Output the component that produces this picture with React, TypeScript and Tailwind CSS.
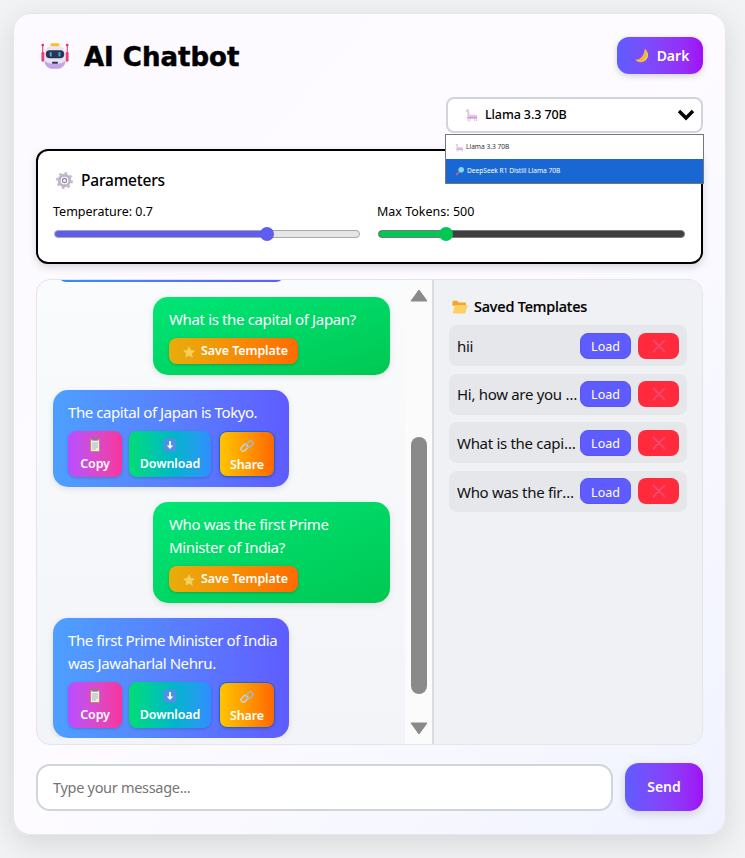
import React from "react";

const Robot = () => (
  <svg width="28" height="27" viewBox="0 0 32 30">
    <rect x="11" y="1" width="10" height="4" rx="1.5" fill="#f9c11c" />
    <path d="M2 4v17M30 4v17" stroke="#ec2f6d" strokeWidth="1.2" />
    <circle cx="2" cy="3" r="1.5" fill="#f0246a" />
    <circle cx="30" cy="3" r="1.5" fill="#f0246a" />
    <rect x="0.5" y="11" width="3.5" height="11" rx="1.5" fill="#ef3a78" />
    <rect x="28" y="11" width="3.5" height="11" rx="1.5" fill="#ef3a78" />
    <rect x="4" y="4" width="24" height="26" rx="8" fill="#e9e2f0" />
    <path d="M4 21c0 5 4 9 8 9h8c4 0 8-4 8-9-5 5-19 5-24 0z" fill="#c3a5e6" />
    <rect x="5.5" y="9" width="21" height="9" rx="4.5" fill="#2e3350" />
    <rect x="10" y="11" width="2.2" height="5" rx="1" fill="#2fb7f5" />
    <rect x="20" y="11" width="2.2" height="5" rx="1" fill="#2fb7f5" />
    <rect x="12.5" y="22" width="7" height="2.5" rx="1.2" fill="#2e3350" />
  </svg>
);

const Gear = () => (
  <svg width="17" height="17" viewBox="0 0 18 18">
    <circle cx="9" cy="9" r="5.6" fill="none" stroke="#bdb4c8" strokeWidth="3" />
    <circle cx="9" cy="9" r="7.8" fill="none" stroke="#c4bccd" strokeWidth="2.4" strokeDasharray="2.8 3.3" />
    <circle cx="9" cy="9" r="2.8" fill="#8f8799" />
    <circle cx="9" cy="9" r="1.6" fill="#f4f1f7" />
  </svg>
);

const Moon = () => (
  <svg width="15" height="15" viewBox="0 0 16 16">
    <path d="M10.4 .6C15.4 4.4 14.8 14 6.6 15.2 3.8 15.6 1.4 14.2.4 12c4.6 1.2 9.4-3 10-11.4z" fill="#f5b53a" />
    <path d="M11.8 2.6c2.6 4.8.2 10.8-5.4 12.2 6.8-.2 9.6-7.6 5.4-12.2z" fill="#fbd968" />
  </svg>
);

const Llama = ({ s = 14 }: { s?: number }) => (
  <svg width={s} height={s} viewBox="0 0 14 14">
    <path
      d="M1.5 1.2 4 1.6l.6 5.2h6c1 0 1.6.8 1.6 1.8v4.6h-1.2V10.6h-.8v2.6H9V10.8H5.6v2.4H4.4v-2.4h-.8v2.4H2.4V5.4c0-.8 0-1.2-.2-1.6L.8 3.4z"
      fill="#e5c3ea"
    />
    <path d="M2.4 9h9.4v1.2H2.4z" fill="#c79ad4" />
  </svg>
);

const Magnifier = () => (
  <svg width="10" height="10" viewBox="0 0 10 10">
    <path d="M4 6 1 9" stroke="#ee5a7a" strokeWidth="1.6" />
    <circle cx="6.2" cy="3.8" r="2.8" fill="#7fd8f5" />
  </svg>
);

const Star = () => (
  <svg width="14" height="14" viewBox="0 0 14 14">
    <path
      d="M7 .6l2 4.2 4.6.6-3.4 3.2.9 4.6L7 10.9l-4.1 2.3.9-4.6L.4 5.4 5 4.8z"
      fill="#f5cf5a"
      stroke="#d9a520"
      strokeWidth=".5"
    />
  </svg>
);

const Clipboard = () => (
  <svg width="12" height="14" viewBox="0 0 12 14">
    <rect x="1" y="1" width="10" height="13" rx="1" fill="#c98a4b" />
    <rect x="2" y="2.4" width="8" height="10.6" fill="#eef0f6" />
    <rect x="3.5" y="0" width="5" height="2.6" rx=".6" fill="#7c818b" />
    <path d="M3 5h6M3 7h6M3 9h6M3 11h4" stroke="#a3a9b5" strokeWidth=".9" />
  </svg>
);

const DownBox = () => (
  <svg width="14" height="14" viewBox="0 0 14 14">
    <rect x=".5" y=".5" width="13" height="13" rx="2" fill="#4f8fe6" />
    <path d="M7 3v6" stroke="#fff" strokeWidth="1.8" />
    <path d="M3.8 7.4h6.4L7 11z" fill="#fff" />
  </svg>
);

const LinkIcon = () => (
  <svg width="14" height="14" viewBox="0 0 14 14" fill="none">
    <rect x=".6" y="6.4" width="7.6" height="4.6" rx="2.3" transform="rotate(-45 4.4 8.7)" stroke="#c9d3e6" strokeWidth="1.4" />
    <rect x="5.8" y="3" width="7.6" height="4.6" rx="2.3" transform="rotate(-45 9.6 5.3)" stroke="#aab6cc" strokeWidth="1.4" />
  </svg>
);

const Folder = () => (
  <svg width="16" height="14" viewBox="0 0 16 14">
    <path d="M.5 2c0-.8.5-1.2 1.2-1.2h3.4l1.4 1.6h6.4c.7 0 1.1.4 1.1 1.1V6H.5z" fill="#f5a623" />
    <path d="M.6 13.2c.2.3.5.4.9.4h10.8c.5 0 .9-.3 1-.8L15.6 6c.1-.5-.2-.9-.7-.9H3.6c-.5 0-.9.3-1 .8z" fill="#fdd063" />
  </svg>
);

const Cross = () => (
  <svg width="14" height="14" viewBox="0 0 14 14">
    <path d="M1 1l12 12M13 1 1 13" stroke="#f2476f" strokeWidth="1.9" />
  </svg>
);

const Slider = ({
  pct,
  fill,
  track,
  border,
}: {
  pct: number;
  fill: string;
  track: string;
  border: string;
}) => (
  <div className={`relative h-2 rounded-full border ${track} ${border}`}>
    <div className={`h-full rounded-full ${fill}`} style={{ width: `${pct}%` }} />
    <div
      className={`absolute top-1/2 h-3.5 w-3.5 -translate-x-1/2 -translate-y-1/2 rounded-full ${fill}`}
      style={{ left: `${pct}%` }}
    />
  </div>
);

const SaveBtn = () => (
  <button className="flex h-[26px] w-[129px] items-center justify-center gap-[5px] rounded-lg bg-gradient-to-r from-[#e8ad0c] to-[#ff6a00] pl-[3px] pt-px text-[12.5px] font-semibold tracking-[-0.1px] text-white shadow-[0_1px_3px_rgba(0,0,0,0.2)]">
    <Star />
    Save Template
  </button>
);

const UserBubble = ({ children }: { children: React.ReactNode }) => (
  <div className="flex justify-end">
    <div className="w-[237px] rounded-[15px] bg-gradient-to-br from-[#00e676] to-[#00c853] px-4 pb-[11px] pt-[11px] text-white shadow-[0_2px_6px_rgba(0,0,0,0.1)]">
      <p className="mb-[7px] whitespace-nowrap text-[15px] leading-[23px] tracking-[-0.36px]">{children}</p>
      <SaveBtn />
    </div>
  </div>
);

const ActionBtn = ({
  cls,
  width,
  icon,
  label,
}: {
  cls: string;
  width: string;
  icon: React.ReactNode;
  label: string;
}) => (
  <button
    className={`flex h-[46px] shrink-0 flex-col items-center gap-[3px] rounded-lg pt-[7px] text-[12.5px] font-semibold leading-[17px] tracking-[-0.1px] text-white shadow-[0_1px_3px_rgba(0,0,0,0.18)] ${cls} ${width}`}
  >
    {icon}
    {label}
  </button>
);

const BotBubble = ({ children }: { children: React.ReactNode }) => (
  <div className="flex justify-start">
    <div className="w-[236px] rounded-[15px] bg-gradient-to-r from-[#4d9fff] to-[#5f5cff] pb-[10px] pl-[15px] pr-[14px] pt-[11px] text-white shadow-[0_2px_6px_rgba(0,0,0,0.1)]">
      <p className="mb-[7px] whitespace-nowrap text-[15px] leading-[23px] tracking-[-0.42px]">{children}</p>
      <div className="flex gap-[7px]">
        <ActionBtn cls="bg-gradient-to-r from-[#b84dff] to-[#f8329c]" width="w-[54px]" icon={<Clipboard />} label="Copy" />
        <ActionBtn cls="bg-gradient-to-r from-[#00dc72] to-[#2f8dff]" width="w-[82px]" icon={<DownBox />} label="Download" />
        <ActionBtn cls="bg-gradient-to-r from-[#ffc400] to-[#ff6600] border border-[#1a66d8] ml-px" width="w-[56px]" icon={<LinkIcon />} label="Share" />
      </div>
    </div>
  </div>
);

const TemplateRow = ({ text }: { text: string }) => (
  <div className="flex h-[41px] items-center rounded-lg bg-[#e5e7eb] pl-2 pr-2">
    <span className="min-w-0 flex-1 truncate pt-px text-[15px] tracking-[-0.3px] text-[#111]">{text}</span>
    <button className="ml-px h-[26px] w-[51px] shrink-0 rounded-lg border border-[#5a57f0] bg-[#5f5cff] pt-[3px] text-[12.5px] text-white">Load</button>
    <button className="ml-[7px] flex h-[26px] w-[41px] shrink-0 items-center justify-center rounded-lg bg-[#ff2a3c]">
      <Cross />
    </button>
  </div>
);

export default function App() {
  return (
    <div className="min-h-[858px] bg-[#f1f3f5] pl-[13px] pt-[13px] font-['Noto_Sans','Open_Sans',sans-serif]">
      <div className="relative h-[822px] w-[713px] rounded-[18px] border border-[#e5e7eb] bg-gradient-to-br from-[#fdfaff] via-[#fdfbff] to-[#f0f3ff] px-[22px] pt-[23px] shadow-[0_8px_32px_rgba(0,0,0,0.12)]">
        <header className="flex h-[37px] items-center justify-between">
          <div className="flex items-center gap-[15px] pl-[5px]">
            <Robot />
            <h1 className="pt-[2px] font-['DejaVu_Sans',sans-serif] text-[26px] font-bold leading-none text-black [-webkit-text-stroke:0.5px_black]">AI Chatbot</h1>
          </div>
          <button className="flex h-[37px] w-[86px] items-center justify-center gap-[7px] rounded-xl bg-gradient-to-r from-[#5f5cff] to-[#a00cf5] pl-[4px] text-sm font-semibold text-white shadow-[0_2px_6px_rgba(0,0,0,0.18)]">
            <Moon />
            Dark
          </button>
        </header>

        <div className="mt-[23px] flex justify-end">
          <div className="relative w-[257px]">
            <div className="flex h-[36px] items-center rounded-lg border-2 border-[#d1d5db] bg-white pl-[17px] pr-[6px] text-[12.5px] font-medium tracking-[-0.1px] text-black">
              <Llama />
              <span className="ml-[6px] flex-1 pt-px">Llama 3.3 70B</span>
              <svg width="18" height="12" viewBox="0 0 18 12">
                <path d="M2 2l7 7 7-7" fill="none" stroke="#000" strokeWidth="3.4" />
              </svg>
            </div>
            <div className="absolute -left-px -right-px top-[37px] z-10 border border-[#767676] bg-white text-[6.6px]">
              <div className="flex h-[24px] items-center gap-[2px] pl-[9px] text-[#333]">
                <Llama s={9} />
                Llama 3.3 70B
              </div>
              <div className="flex h-[24px] items-center gap-[2px] bg-[#1967d2] pl-[9px] text-white">
                <Magnifier />
                DeepSeek R1 Distill Llama 70B
              </div>
            </div>
          </div>
        </div>

        <section className="mt-[16px] h-[115px] rounded-xl border-2 border-black bg-white px-[15px] pt-[19px] shadow-[0_3px_8px_rgba(0,0,0,0.15)]">
          <div className="flex items-center gap-[8px] pl-[3px] text-[15.5px] font-medium leading-[20px] tracking-[-0.2px] text-black">
            <Gear />
            Parameters
          </div>
          <div className="mt-[14px] grid grid-cols-2 gap-x-[15px]">
            <div>
              <div className="mb-[10px] text-[12.5px] leading-[16px] text-black">Temperature: 0.7</div>
              <div className="ml-[1px] w-[306px]">
                <Slider pct={69.7} fill="bg-[#5f5cf0]" track="bg-[#e6e6e6]" border="border-[#a8a8a8]" />
              </div>
            </div>
            <div>
              <div className="mb-[10px] text-[12.5px] leading-[16px] text-black">Max Tokens: 500</div>
              <div className="ml-[1px] w-[307px]">
                <Slider pct={22} fill="bg-[#00c853]" track="bg-[#3f3f3f]" border="border-[#7a7a7a]" />
              </div>
            </div>
          </div>
        </section>

        <main className="mt-[15px] flex h-[466px] overflow-hidden rounded-[14px] border border-[#e3e5ea] bg-gradient-to-b from-[#fafbfd] to-[#f3f4f7]">
          <div className="flex min-w-0 flex-1 flex-col overflow-hidden">
            <div className="flex flex-col gap-[15px] overflow-hidden pl-[16px] pr-[15px]">
              <div className="-mt-[14px] ml-[5px] h-[16px] w-[226px] shrink-0 rounded-[15px] bg-gradient-to-r from-[#2f8dff] to-[#5f5cff]" />
              <UserBubble>What is the capital of Japan?</UserBubble>
              <BotBubble>The capital of Japan is Tokyo.</BotBubble>
              <UserBubble>
                Who was the first Prime
                <br />
                Minister of India?
              </UserBubble>
              <BotBubble>
                The first Prime Minister of India
                <br />
                was Jawaharlal Nehru.
              </BotBubble>
            </div>
          </div>
          <div className="flex w-[29px] shrink-0 flex-col items-center border-r-2 border-[#d9dbe0] bg-[#fbfbfc] pl-[1px]">
            <svg className="mt-[9px]" width="18" height="13" viewBox="0 0 18 13">
              <path d="M9 1l8 11H1z" fill="#8a8a8a" stroke="#8a8a8a" strokeLinejoin="round" />
            </svg>
            <div className="mt-[135px] h-[257px] w-[16px] rounded-full bg-[#8a8a8a]" />
            <svg className="mt-[28px]" width="18" height="13" viewBox="0 0 18 13">
              <path d="M9 12 17 1H1z" fill="#8a8a8a" stroke="#8a8a8a" strokeLinejoin="round" />
            </svg>
          </div>
          <aside className="w-[268px] shrink-0 bg-[#f0f1f4] px-[15px] pt-[17px]">
            <div className="flex items-center gap-[6px] pl-[3px] text-[14.4px] font-medium leading-[20px] tracking-[-0.15px] text-black [-webkit-text-stroke:0.2px_black]">
              <Folder />
              Saved Templates
            </div>
            <div className="mt-[8px] flex flex-col gap-[7.67px]">
              <TemplateRow text="hii" />
              <TemplateRow text="Hi, how are you today?" />
              <TemplateRow text="What is the capital of Japan?" />
              <TemplateRow text="Who was the first Prime Minister?" />
            </div>
          </aside>
        </main>

        <footer className="mt-[18px] flex items-center gap-[12px]">
          <input
            readOnly
            placeholder="Type your message..."
            className="h-[47px] w-[577px] rounded-[14px] border-2 border-[#d1d5db] bg-white px-[15px] text-[14.5px] tracking-[-0.3px] outline-none placeholder:text-[#757575]"
          />
          <button className="h-[48px] w-[78px] rounded-[14px] bg-gradient-to-r from-[#5f5cff] to-[#a00cf5] text-sm font-semibold text-white shadow-[0_3px_10px_rgba(0,0,0,0.15)]">
            Send
          </button>
        </footer>
      </div>
    </div>
  );
}
